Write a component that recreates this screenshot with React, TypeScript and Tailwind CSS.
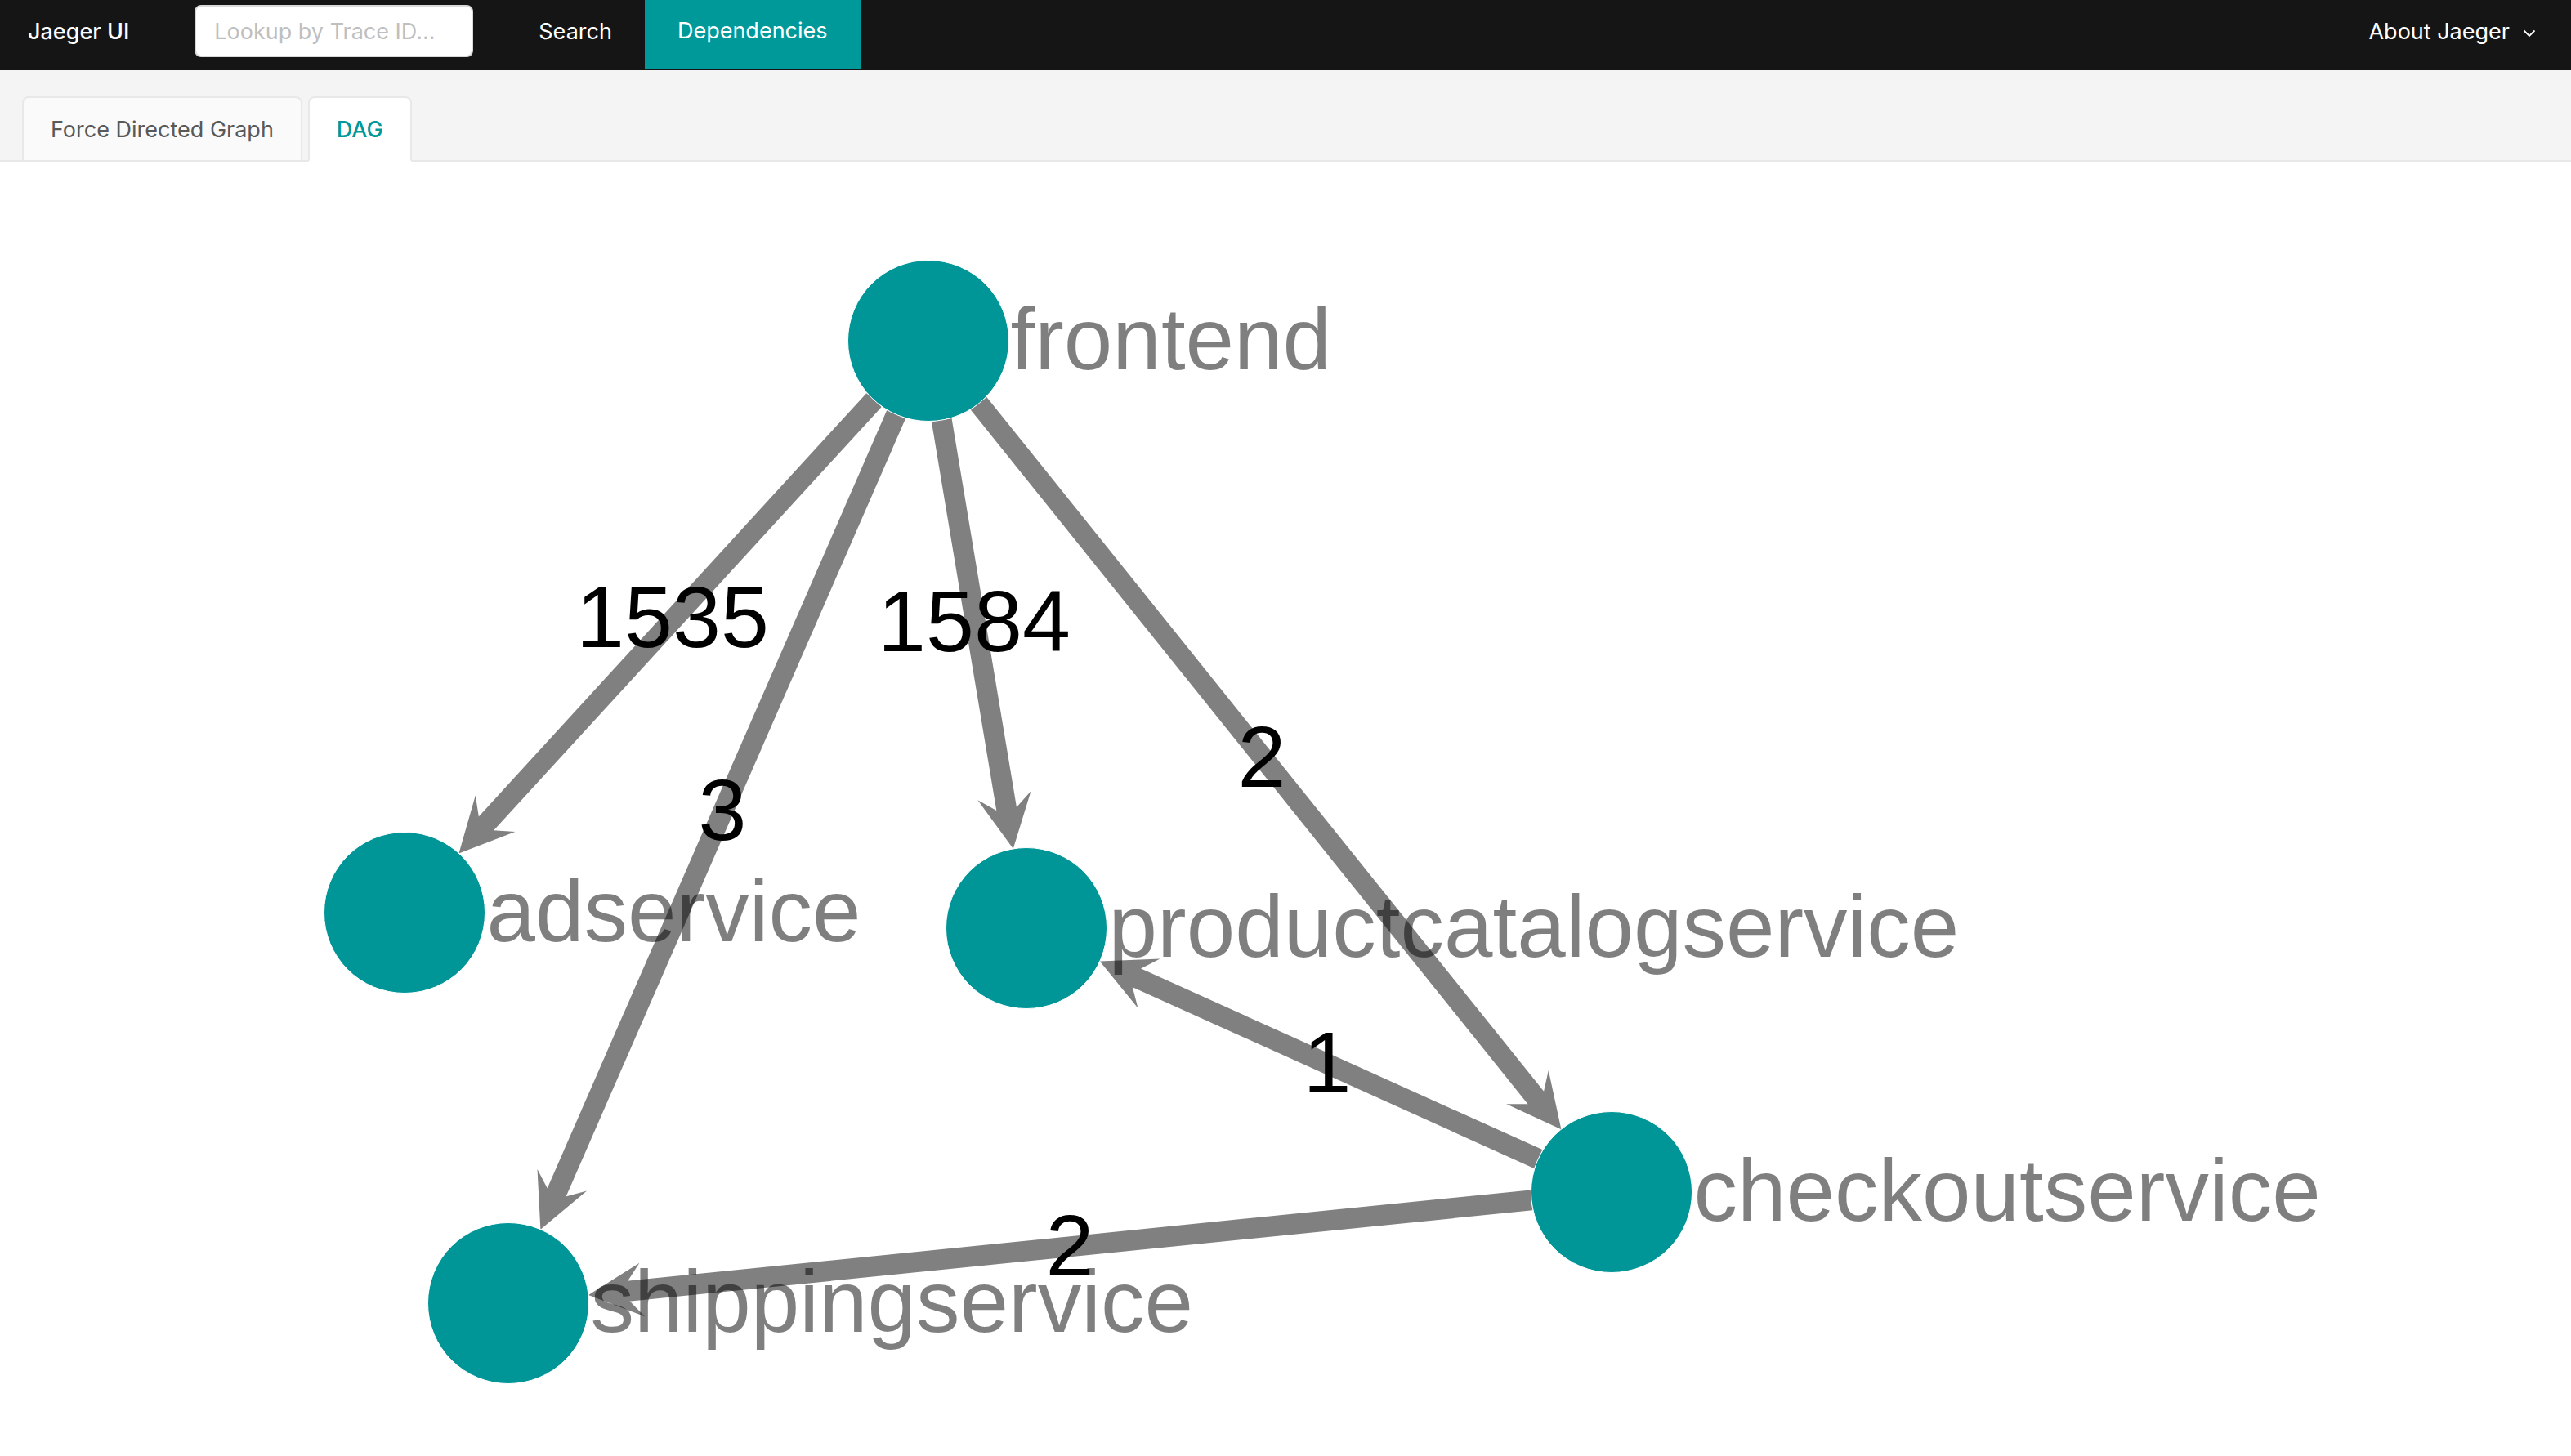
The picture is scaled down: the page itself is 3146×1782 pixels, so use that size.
import React from 'react';

const R = 98.5;
const AL = 66; // arrow length
const AW = 66; // arrow width

const nodes: Record<string, [number, number]> = {
    frontend: [1136, 417],
    adservice: [495, 1117],
    productcatalogservice: [1256, 1136],
    checkoutservice: [1972, 1459],
    shippingservice: [622, 1595],
};

const edges = [
    { from: 'frontend', to: 'adservice', label: '1535', lx: 823, ly: 792 },
    { from: 'frontend', to: 'shippingservice', label: '3', lx: 884, ly: 1028 },
    { from: 'frontend', to: 'productcatalogservice', label: '1584', lx: 1192, ly: 797 },
    { from: 'frontend', to: 'checkoutservice', label: '2', lx: 1544, ly: 963 },
    { from: 'checkoutservice', to: 'productcatalogservice', label: '1', lx: 1624, ly: 1337 },
    { from: 'checkoutservice', to: 'shippingservice', label: '2', lx: 1309, ly: 1561 },
];

function edgeGeometry(from: string, to: string) {
    const [x1, y1] = nodes[from];
    const [x2, y2] = nodes[to];
    const len = Math.hypot(x2 - x1, y2 - y1);
    const dx = (x2 - x1) / len;
    const dy = (y2 - y1) / len;
    // perpendicular
    const px = -dy;
    const py = dx;
    const sx = x1 + dx * R;
    const sy = y1 + dy * R;
    const tx = x2 - dx * R;
    const ty = y2 - dy * R;
    const ex = tx - dx * AL * 0.55;
    const ey = ty - dy * AL * 0.55;
    const bx = tx - dx * AL;
    const by = ty - dy * AL;
    const nx = tx - dx * AL * 0.6;
    const ny = ty - dy * AL * 0.6;
    const arrow = [
        [tx, ty],
        [bx + px * AW / 2, by + py * AW / 2],
        [nx, ny],
        [bx - px * AW / 2, by - py * AW / 2],
    ]
        .map((p) => p.map((v) => v.toFixed(1)).join(','))
        .join(' ');
    return { sx, sy, ex, ey, arrow };
}

function Chevron() {
    return (
        <svg width="16" height="10" viewBox="0 0 16 10" fill="none" className="ml-[16px] mt-[4px]">
            <polyline points="1.5,1.5 8,8 14.5,1.5" stroke="#fff" strokeWidth="1.8" />
        </svg>
    );
}

function TopNav() {
    return (
        <header className="flex h-[86px] shrink-0 bg-[#151515] font-['Inter',sans-serif] text-[27px] text-white">
            <div className="flex items-center pb-[8px] pl-[34px] pr-[80px] font-medium">Jaeger UI</div>
            <div className="pt-[6px]">
                <input
                    readOnly
                    placeholder="Lookup by Trace ID..."
                    className="h-[64px] w-[341px] rounded-[8px] border-2 border-[#d9d9d9] bg-white px-[22px] text-[27px] text-black outline-none placeholder:text-[#bfbfbf]"
                />
            </div>
            <nav className="ml-[40px] flex">
                <div className="flex items-center px-[40px] pb-[8px]">Search</div>
                <div className="flex h-[84px] items-center bg-[#009999] px-[40px] pb-[8px]">Dependencies</div>
            </nav>
            <div className="ml-auto flex items-center pb-[8px] pr-[43px]">
                About Jaeger
                <Chevron />
            </div>
        </header>
    );
}

function Tabs() {
    return (
        <div className="flex h-[112px] shrink-0 items-end border-b-2 border-[#e8e8e8] bg-[#f4f4f4] pl-[27px] font-['Inter',sans-serif] text-[27px]">
            <div className="-mb-[2px] flex gap-[7px]">
                <div className="flex h-[80px] items-center rounded-t-[8px] border-2 border-[#e8e8e8] bg-[#fafafa] px-[33px] pt-[2px] text-[#595959]">
                    Force Directed Graph
                </div>
                <div className="flex h-[80px] items-center rounded-t-[8px] border-2 border-b-white border-[#e8e8e8] bg-white px-[33px] pt-[2px] font-medium text-[#009999]">
                    DAG
                </div>
            </div>
        </div>
    );
}

function DagGraph() {
    return (
        <svg
            width={3146}
            height={1584}
            viewBox="0 198 3146 1584"
            className="block"
            style={{ fontFamily: '"Liberation Sans", Arial, sans-serif' }}
        >
            {/* edges */}
            <g>
                {edges.map((e, i) => {
                    const g = edgeGeometry(e.from, e.to);
                    return (
                        <g key={i}>
                            <line x1={g.sx} y1={g.sy} x2={g.ex} y2={g.ey} stroke="#808080" strokeWidth={25} />
                            <polygon points={g.arrow} fill="#808080" />
                        </g>
                    );
                })}
            </g>

            {/* edge labels */}
            <g>
                {edges.map((e, i) => (
                    <text key={i} x={e.lx} y={e.ly} fontSize={106} textAnchor="middle" fill="#000">
                        {e.label}
                    </text>
                ))}
            </g>

            {/* nodes */}
            <g>
                {Object.entries(nodes).map(([name, [cx, cy]]) => (
                    <g key={name}>
                        <circle cx={cx} cy={cy} r={R} fill="#009597" stroke="#fff" strokeWidth={1} />
                        <text x={cx + R + 2} y={cy + 35} fontSize={107} fill="#000" fillOpacity={0.5}>
                            {name}
                        </text>
                    </g>
                ))}
            </g>
        </svg>
    );
}

export default function App() {
    return (
        <div className="flex h-screen w-full flex-col overflow-hidden bg-white">
            <TopNav />
            <Tabs />
            <div className="flex-1">
                <DagGraph />
            </div>
        </div>
    );
}
